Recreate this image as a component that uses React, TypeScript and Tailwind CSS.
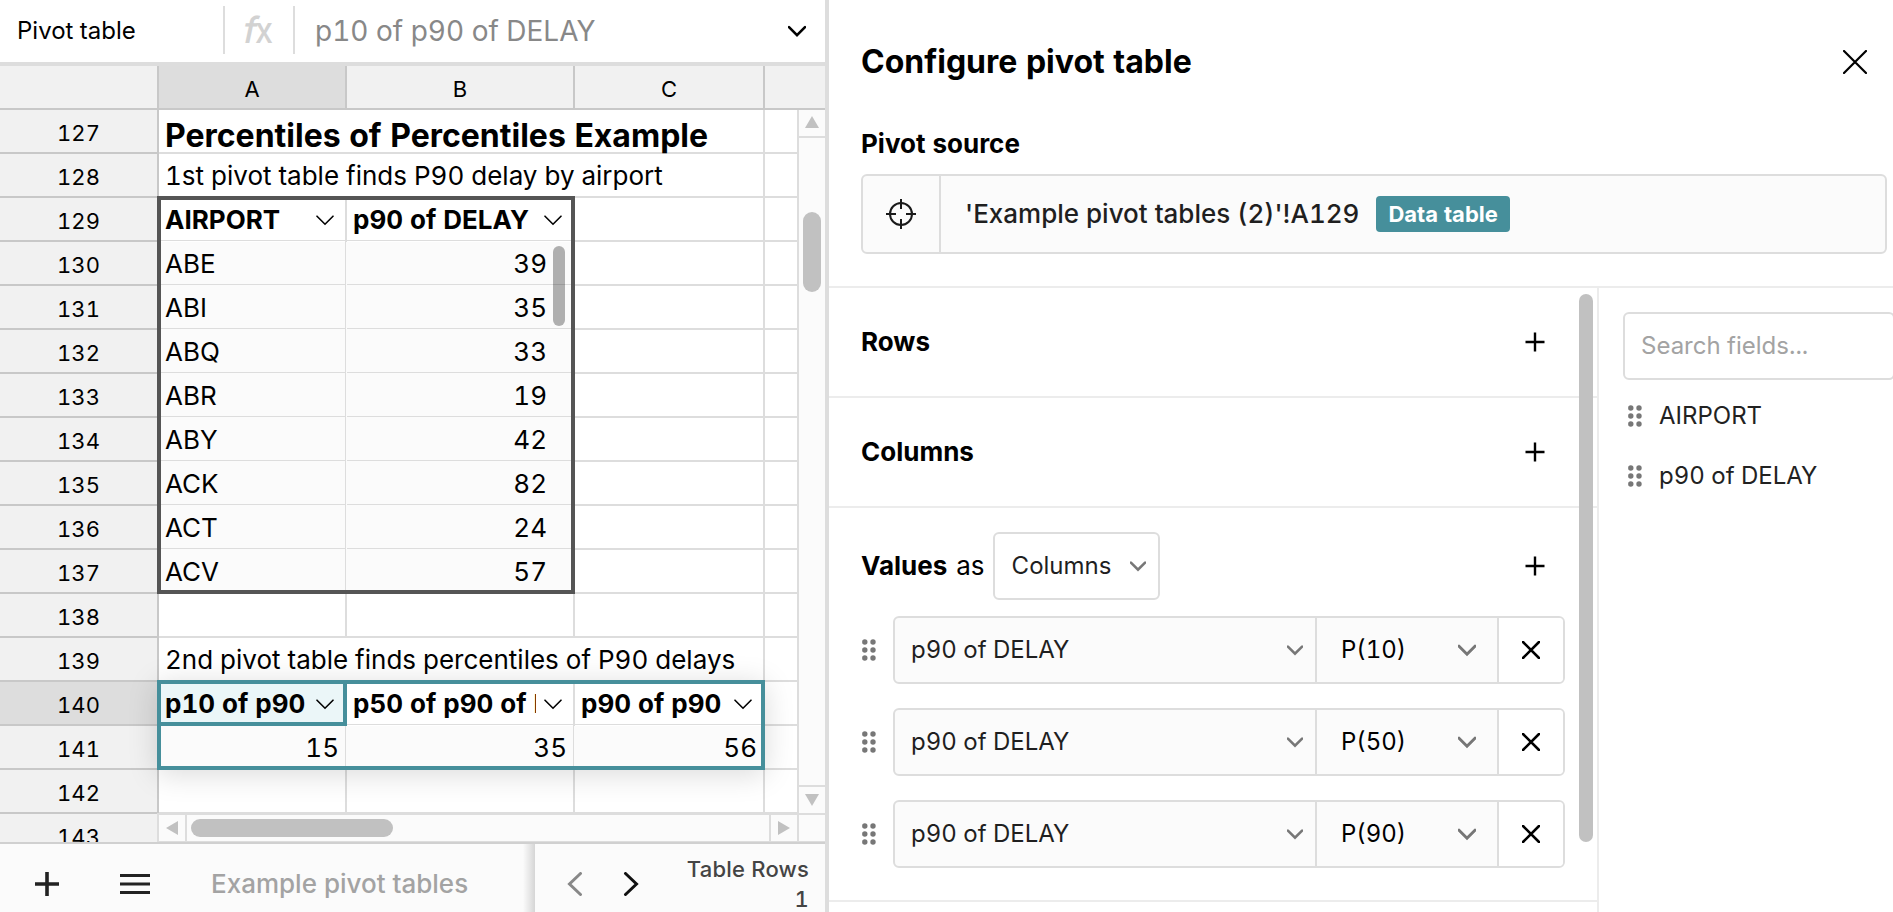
import React from 'react';
import clsx from 'clsx';

type Column = 'A' | 'B' | 'C' | 'D';

interface SheetRow {
  row: number;
  kind: 'empty' | 'title' | 'text' | 'head' | 'data';
  text?: string;
  cells?: string[];
}

const COLUMN_WIDTHS: Record<Column, string> = {
  A: 'w-[188px]',
  B: 'w-[228px]',
  C: 'w-[190px]',
  D: 'w-[60px]',
};

const ROWS: SheetRow[] = [
  { row: 127, kind: 'title', text: 'Percentiles of Percentiles Example' },
  { row: 128, kind: 'text', text: '1st pivot table finds P90 delay by airport' },
  { row: 129, kind: 'head', cells: ['AIRPORT', 'p90 of DELAY'] },
  { row: 130, kind: 'data', cells: ['ABE', '39'] },
  { row: 131, kind: 'data', cells: ['ABI', '35'] },
  { row: 132, kind: 'data', cells: ['ABQ', '33'] },
  { row: 133, kind: 'data', cells: ['ABR', '19'] },
  { row: 134, kind: 'data', cells: ['ABY', '42'] },
  { row: 135, kind: 'data', cells: ['ACK', '82'] },
  { row: 136, kind: 'data', cells: ['ACT', '24'] },
  { row: 137, kind: 'data', cells: ['ACV', '57'] },
  { row: 138, kind: 'empty' },
  { row: 139, kind: 'text', text: '2nd pivot table finds percentiles of P90 delays' },
  { row: 140, kind: 'head', cells: ['p10 of p90', 'p50 of p90 of DELAY', 'p90 of p90'] },
  { row: 141, kind: 'data', cells: ['15', '35', '56'] },
  { row: 142, kind: 'empty' },
];

const ROW_NUMBERS = [...ROWS.map((r) => r.row), 143];
const ACTIVE_ROW = 140;
const VALUE_FIELDS = ['P(10)', 'P(50)', 'P(90)'];
const FIELDS = ['AIRPORT', 'p90 of DELAY'];

/* Icons */

interface ChevronProps {
  className?: string;
  width?: number;
  stroke?: number;
}

const ChevronDown: React.FC<ChevronProps> = ({ className, width = 18, stroke = 2 }) => (
  <svg
    width={width}
    height={width}
    viewBox="0 0 18 18"
    fill="none"
    stroke="currentColor"
    strokeWidth={stroke}
    strokeLinecap="round"
    className={clsx('shrink-0', className)}
  >
    <path d="M1 5.2 9 13.2 17 5.2" />
  </svg>
);

const PlusIcon: React.FC = () => (
  <svg width="20" height="20" viewBox="0 0 20 20" stroke="currentColor" strokeWidth="2.4" className="shrink-0">
    <path d="M10 .5v19M.5 10h19" />
  </svg>
);

const CloseIcon: React.FC<{ size: number; stroke: number }> = ({ size, stroke }) => (
  <svg width={size} height={size} viewBox={`0 0 ${size} ${size}`} stroke="currentColor" strokeWidth={stroke} strokeLinecap="round">
    <path d={`M1 1 ${size - 1} ${size - 1}M${size - 1} 1 1 ${size - 1}`} />
  </svg>
);

const DragHandle: React.FC = () => (
  <svg width="14" height="22" viewBox="0 0 14 22" className="shrink-0 fill-[#777]">
    {[3, 11, 19].map((cy) => (
      <React.Fragment key={cy}>
        <circle cx="2.8" cy={cy} r="2.7" />
        <circle cx="11" cy={cy} r="2.7" />
      </React.Fragment>
    ))}
  </svg>
);

const TargetIcon: React.FC = () => (
  <svg width="30" height="30" viewBox="0 0 30 30" fill="none" stroke="#1a1a1a" strokeWidth="2">
    <circle cx="15" cy="15" r="11" />
    <path d="M15 0v10M15 20v10M0 15h10M20 15h10" />
  </svg>
);

/* Spreadsheet */

const FormulaBar: React.FC = () => (
  <div className="flex h-[66px] shrink-0 items-center border-b-4 border-[#ddd] bg-white">
    <div className="w-[223px] pl-[17px] text-[24px]">Pivot table</div>
    <div className="-mt-[2px] flex h-12 w-[72px] items-center justify-center border-x-2 border-[#ddd] text-[36px] font-medium text-[#d2d2d2]">
      <span className="-skew-x-12">f</span>
      <span className="-ml-[3px] scale-x-90">x</span>
    </div>
    <div className="flex-1 pl-5 text-[28px] text-[#888]">p10 of p90 of DELAY</div>
    <ChevronDown className="mr-[19px]" stroke={2.6} />
  </div>
);

const ColumnHeaders: React.FC = () => (
  <div className="flex h-11 shrink-0 border-b-2 border-[#c8c8c8] bg-[#f1f1f1] text-[22px]">
    <div className="w-[159px] border-r-2 border-[#c8c8c8]" />
    {(['A', 'B', 'C'] as Column[]).map((col) => (
      <div
        key={col}
        className={clsx(
          'flex items-center justify-center border-r-2 border-[#c8c8c8] pt-1',
          COLUMN_WIDTHS[col],
          col === 'A' && 'bg-[#ddd]',
        )}
      >
        {col}
      </div>
    ))}
  </div>
);

const HeadCell: React.FC<{ label: string; column: Column; active: boolean }> = ({ label, column, active }) => (
  <div
    className={clsx(
      'flex h-11 shrink-0 items-center border-r-2 border-[#ddd] pb-px',
      COLUMN_WIDTHS[column],
      active ? 'bg-[#ebf6f8]' : 'bg-white',
    )}
  >
    <div className="flex h-full w-full items-center border-b border-[#ddd] pl-[6px] pr-[11px] pt-[2px]">
      <span className="min-w-0 flex-1 overflow-hidden whitespace-nowrap text-[26px] font-bold leading-9">{label}</span>
      <ChevronDown className="ml-2" stroke={1.6} />
    </div>
  </div>
);

const DataCell: React.FC<{ value: string; column: Column; scrolled: boolean }> = ({ value, column, scrolled }) => (
  <div className={clsx('h-11 shrink-0 bg-[#fbfbfb] pr-px', COLUMN_WIDTHS[column])}>
    <div className="h-full border-r border-[#ddd] pb-px">
      <div
        className={clsx(
          'flex h-full items-center border-b border-[#ddd] pl-[6px] pt-[2px] text-[26px]',
          /^\d/.test(value) && 'justify-end',
          scrolled ? 'pr-[26px]' : 'pr-[6px]',
        )}
      >
        {value}
      </div>
    </div>
  </div>
);

const EmptyCell: React.FC<{ column: Column }> = ({ column }) => (
  <div className={clsx('h-11 shrink-0 border-b-2 border-r-2 border-[#ddd]', COLUMN_WIDTHS[column])} />
);

const GridRow: React.FC<{ data: SheetRow }> = ({ data }) => {
  if (data.kind === 'title' || data.kind === 'text') {
    return (
      <div className="flex">
        <div
          className={clsx(
            'flex h-11 w-[606px] shrink-0 items-center whitespace-nowrap border-b-2 border-r-2 border-[#ddd] pl-[6px]',
            data.kind === 'title' ? 'pt-[9px] text-[32px] font-bold' : 'pt-[2px] text-[26px]',
          )}
        >
          {data.text}
        </div>
        <EmptyCell column="D" />
      </div>
    );
  }

  return (
    <div className="flex">
      {(['A', 'B', 'C', 'D'] as Column[]).map((col, i) => {
        const value = data.cells?.[i];
        if (value === undefined) return <EmptyCell key={col} column={col} />;
        if (data.kind === 'head') {
          return <HeadCell key={col} label={value} column={col} active={data.row === ACTIVE_ROW && i === 0} />;
        }
        return <DataCell key={col} value={value} column={col} scrolled={data.cells?.length === 2} />;
      })}
    </div>
  );
};

const Arrow: React.FC<{ className?: string }> = ({ className }) => (
  <svg width="14" height="12" viewBox="0 0 14 12" className={clsx('fill-[#c1c1c1]', className)}>
    <path d="M7 0 14 12H0z" />
  </svg>
);

const Sheet: React.FC = () => (
  <div className="relative flex h-[732px] shrink-0">
    <div className="w-[159px] shrink-0 overflow-hidden border-r-2 border-[#c8c8c8] text-[22px]">
      {ROW_NUMBERS.map((n) => (
        <div
          key={n}
          className={clsx(
            'flex h-11 items-center justify-center border-b-2 border-[#c8c8c8] pt-1',
            n === ACTIVE_ROW ? 'bg-[#ddd]' : 'bg-[#f1f1f1]',
          )}
        >
          {n}
        </div>
      ))}
    </div>

    <div className="flex w-[666px] flex-col">
      <div className="flex h-[703px]">
        <div className="w-[638px] overflow-hidden">
          {ROWS.map((r) => (
            <GridRow key={r.row} data={r} />
          ))}
        </div>
        {/* Vertical scrollbar */}
        <div className="flex w-7 flex-col border-l-2 border-[#ddd] bg-[#fbfbfb]">
          <div className="flex h-7 items-center justify-center border-b-2 border-[#ddd] pb-[2px]">
            <Arrow />
          </div>
          <div className="flex flex-1 justify-center pt-[74px]">
            <div className="h-20 w-[18px] rounded-full bg-[#c1c1c1]" />
          </div>
          <div className="flex h-7 items-center justify-center border-t-2 border-[#ddd]">
            <Arrow className="rotate-180" />
          </div>
        </div>
      </div>
      {/* Horizontal scrollbar */}
      <div className="relative -ml-[2px] flex h-[29px] border-b border-l-2 border-t-2 border-[#ddd] bg-[#fbfbfb]">
        <div className="flex w-7 items-center justify-center border-r-2 border-[#ddd]">
          <Arrow className="-rotate-90" />
        </div>
        <div className="flex flex-1 items-center pl-1">
          <div className="h-[18px] w-[202px] rounded-full bg-[#c1c1c1]" />
        </div>
        <div className="flex w-[30px] items-center justify-center border-x-2 border-[#ddd]">
          <Arrow className="rotate-90" />
        </div>
        <div className="w-[26px]" />
      </div>
    </div>

    {/* Outlines of the two pivot tables */}
    <div className="pointer-events-none absolute left-[157px] top-[86px] h-[398px] w-[418px] border-4 border-[#555]">
      <div className="absolute right-[6px] top-[46px] h-20 w-3 rounded-full bg-black/30" />
    </div>
    <div className="pointer-events-none absolute left-[157px] top-[570px] h-[90px] w-[608px] border-4 border-[#468f9b] shadow-[0_4px_28px_rgba(0,0,0,0.15)]">
      <div className="absolute -left-1 -top-1 h-[46px] w-[190px] border-4 border-[#468f9b]" />
    </div>
  </div>
);

const TabBar: React.FC = () => (
  <div className="flex h-[82px] shrink-0 items-center border-t-2 border-[#d0d0d0] bg-[#fbfbfb]">
    <svg width="24" height="24" viewBox="0 0 24 24" stroke="#222" strokeWidth="3.6" className="ml-[35px]">
      <path d="M12 0v24M0 12h24" />
    </svg>
    <svg width="30" height="20" viewBox="0 0 30 20" stroke="#222" strokeWidth="3" className="ml-[61px]">
      <path d="M0 1.5h30M0 10h30M0 18.5h30" />
    </svg>
    <div className="flex h-full flex-1 items-center pl-[61px] text-[26px] font-medium text-[#a3a3a3]">
      Example pivot tables
    </div>
    <div className="h-full w-3 bg-linear-to-r from-transparent to-black/15" />
    <div className="flex h-full w-[290px] items-center pl-8">
      <svg width="16" height="24" viewBox="0 0 16 24" fill="none" stroke="#888" strokeWidth="3" strokeLinecap="round">
        <path d="M13.5 1.5 2.5 12l11 10.5" />
      </svg>
      <svg width="16" height="24" viewBox="0 0 16 24" fill="none" stroke="#111" strokeWidth="3" strokeLinecap="round" className="ml-10">
        <path d="M2.5 1.5 13.5 12l-11 10.5" />
      </svg>
      <div className="ml-auto mr-4 text-right text-[22px] font-medium leading-[30px] tracking-[0.2px] text-[#444]">
        <div>Table Rows</div>
        <div>1</div>
      </div>
    </div>
  </div>
);

/* Configuration panel */

const Section: React.FC<{ title: string }> = ({ title }) => (
  <div className="flex h-[110px] items-center justify-between border-b-2 border-[#ececec] pl-8 pr-[52px]">
    <h2 className="text-[26px] font-bold">{title}</h2>
    <PlusIcon />
  </div>
);

const ValueRow: React.FC<{ percentile: string }> = ({ percentile }) => (
  <div className="flex h-[68px] items-center">
    <DragHandle />
    <div className="ml-[17px] flex h-full w-[672px] overflow-hidden rounded-md border-2 border-[#ddd] bg-[#fbfbfb] text-[24px]">
      <div className="flex w-[422px] items-center justify-between border-r-2 border-[#ddd] pl-4 pr-3 text-[#1f1f1f]">
        p90 of DELAY
        <ChevronDown width={16} stroke={3} className="text-[#777]" />
      </div>
      <div className="flex w-[182px] items-center justify-between border-r-2 border-[#ddd] pl-6 pr-[21px]">
        {percentile}
        <ChevronDown stroke={3} className="text-[#777]" />
      </div>
      <div className="flex flex-1 items-center justify-center bg-white">
        <CloseIcon size={18} stroke={2.6} />
      </div>
    </div>
  </div>
);

const ConfigPanel: React.FC = () => (
  <div className="flex min-w-0 flex-1 flex-col bg-white">
    <div className="flex h-[286px] shrink-0 flex-col pl-8">
      <div className="mt-[42px] flex h-10 items-center justify-between pr-[26px]">
        <h1 className="text-[32px] font-bold">Configure pivot table</h1>
        <CloseIcon size={24} stroke={2.2} />
      </div>
      <div className="mt-11 h-9 text-[26px] font-bold leading-9">Pivot source</div>
      <div className="mt-3 flex h-20 w-[1026px] rounded-md border-2 border-[#ddd] bg-[#fbfbfb]">
        <div className="flex w-[78px] items-center justify-center border-r-2 border-[#ddd]">
          <TargetIcon />
        </div>
        <div className="flex items-center pl-6 text-[26px] font-medium text-[#1f1f1f]">
          'Example pivot tables (2)'!A129
          <span className="ml-[17px] flex h-9 items-center rounded bg-[#468f9b] px-3 text-[22px] font-bold text-white">
            Data table
          </span>
        </div>
      </div>
    </div>

    <div className="flex flex-1 border-t-2 border-[#ececec]">
      <div className="relative w-[770px] shrink-0 border-r-2 border-[#ececec]">
        <Section title="Rows" />
        <Section title="Columns" />
        <div className="h-[394px] border-b-2 border-[#ececec] pl-8 pr-8 pt-6">
          <div className="flex h-[68px] items-center pr-5">
            <h2 className="text-[26px] font-bold">Values</h2>
            <span className="ml-[9px] text-[26px]">as</span>
            <div className="ml-2 flex h-full w-[167px] items-center justify-between rounded-md border-2 border-[#ddd] pl-[17px] pr-3 text-[24px] text-[#1f1f1f]">
              Columns
              <ChevronDown width={16} stroke={3} className="text-[#777]" />
            </div>
            <div className="ml-auto">
              <PlusIcon />
            </div>
          </div>
          <div className="mt-4 flex flex-col gap-6 pl-px">
            {VALUE_FIELDS.map((p) => (
              <ValueRow key={p} percentile={p} />
            ))}
          </div>
        </div>
        <div className="absolute right-1 top-[6px] h-[548px] w-[14px] rounded-full bg-[#c1c1c1]" />
      </div>

      <div className="w-[294px] shrink-0 overflow-hidden pl-6 pt-6 text-[24px]">
        <div className="flex h-[68px] w-[272px] items-center rounded-md border-2 border-[#ddd] pl-4 text-[#a3a3a3]">
          Search fields...
        </div>
        <div className="mt-[6px]">
          {FIELDS.map((field) => (
            <div key={field} className="flex h-[60px] items-center gap-[17px] pl-[5px] text-[#222]">
              <DragHandle />
              {field}
            </div>
          ))}
        </div>
      </div>
    </div>
  </div>
);

const App: React.FC = () => {
  return (
    <div className="flex h-[912px] w-[1893px] overflow-hidden bg-white font-['Inter',sans-serif] leading-none text-black tabular-nums">
      <div className="flex w-[829px] shrink-0 flex-col border-r-4 border-[#ddd]">
        <FormulaBar />
        <ColumnHeaders />
        <Sheet />
        <TabBar />
      </div>
      <ConfigPanel />
    </div>
  );
};

export default App;
